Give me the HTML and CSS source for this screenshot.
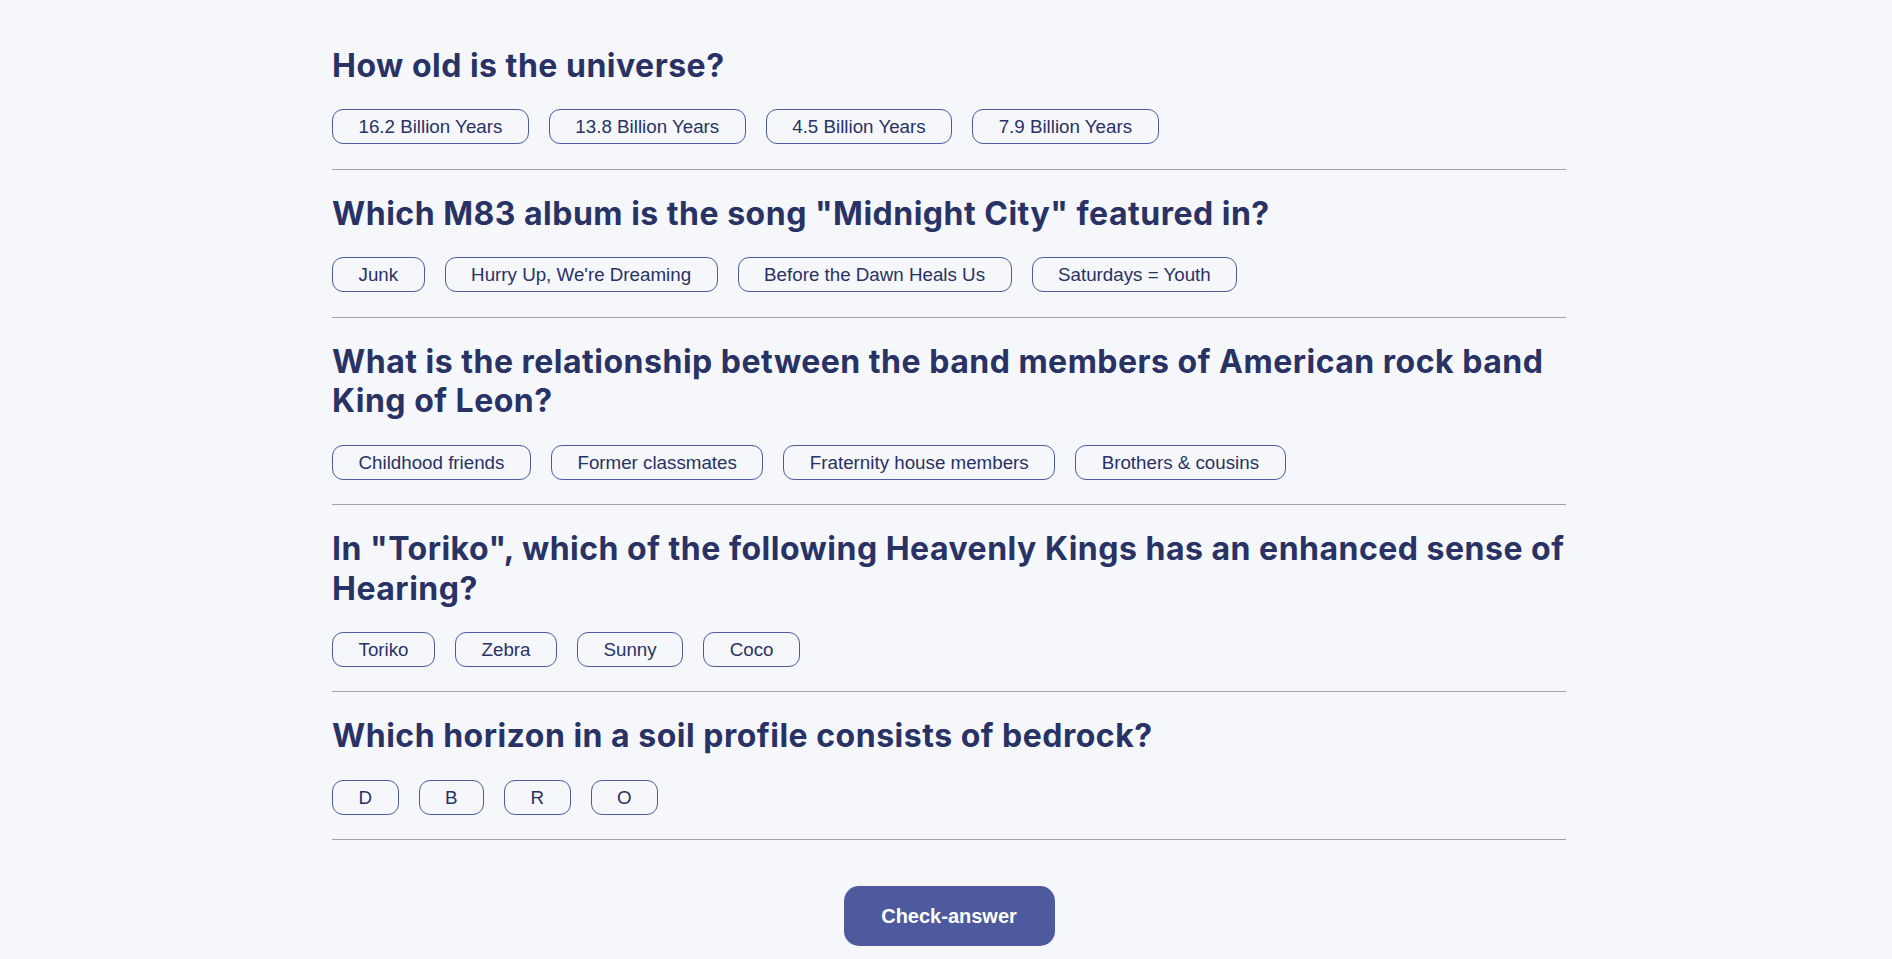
FILE: index.html
```html
<!DOCTYPE html>
<html lang="en">
<head>
<meta charset="utf-8">
<title>Quizzical</title>
<link rel="stylesheet" href="styles.css">
</head>
<body>
<main class="quiz">
  <section class="question">
    <h2 class="question-title">How old is the universe?</h2>
    <div class="options">
      <button class="option">16.2 Billion Years</button>
      <button class="option">13.8 Billion Years</button>
      <button class="option">4.5 Billion Years</button>
      <button class="option">7.9 Billion Years</button>
    </div>
  </section>
  <section class="question">
    <h2 class="question-title">Which M83 album is the song "Midnight City" featured in?</h2>
    <div class="options">
      <button class="option">Junk</button>
      <button class="option">Hurry Up, We're Dreaming</button>
      <button class="option">Before the Dawn Heals Us</button>
      <button class="option">Saturdays = Youth</button>
    </div>
  </section>
  <section class="question">
    <h2 class="question-title">What is the relationship between the band members of American rock band King of Leon?</h2>
    <div class="options">
      <button class="option">Childhood friends</button>
      <button class="option">Former classmates</button>
      <button class="option">Fraternity house members</button>
      <button class="option">Brothers &amp; cousins</button>
    </div>
  </section>
  <section class="question">
    <h2 class="question-title">In "Toriko", which of the following Heavenly Kings has an enhanced sense of Hearing?</h2>
    <div class="options">
      <button class="option">Toriko</button>
      <button class="option">Zebra</button>
      <button class="option">Sunny</button>
      <button class="option">Coco</button>
    </div>
  </section>
  <section class="question">
    <h2 class="question-title">Which horizon in a soil profile consists of bedrock?</h2>
    <div class="options">
      <button class="option">D</button>
      <button class="option">B</button>
      <button class="option">R</button>
      <button class="option">O</button>
    </div>
  </section>
  <div class="actions">
    <button class="check-btn">Check-answer</button>
  </div>
</main>
</body>
</html>
```
FILE: styles.css
```css
* { box-sizing: border-box; }

html, body {
  margin: 0;
  padding: 0;
  background: #f5f7fb;
}

body {
  font-family: "Liberation Sans", Arial, sans-serif;
  color: #293264;
}

.quiz {
  width: 1234px;
  margin: 0 auto;
  padding: 46px 0 13px;
  position: relative;
  left: 3px;
}

.question {
  border-bottom: 1px solid #a3a3a6;
  padding-bottom: 24.5px;
  margin-bottom: 24px;
}

.question-title {
  margin: 0 0 24px;
  font-family: Inter, "Noto Sans", sans-serif;
  font-weight: 700;
  font-size: 32px;
  line-height: 39.4px;
  letter-spacing: 0.5px;
  color: #293264;
}

.options {
  display: flex;
  flex-wrap: wrap;
  gap: 20px;
}

.option {
  font-family: "Liberation Sans", Arial, sans-serif;
  font-size: 18.75px;
  line-height: 21px;
  height: 35px;
  padding: 6px 25.5px;
  border: 1px solid #4d5b9e;
  border-radius: 11px;
  background: transparent;
  color: #293264;
  cursor: pointer;
}

.actions {
  display: flex;
  justify-content: center;
  padding-top: 22px;
}

.check-btn {
  width: 211px;
  height: 60px;
  border: none;
  border-radius: 15px;
  background: #4d5b9e;
  color: #ffffff;
  font-family: "Liberation Sans", Arial, sans-serif;
  font-weight: 700;
  font-size: 20px;
  cursor: pointer;
}
```
